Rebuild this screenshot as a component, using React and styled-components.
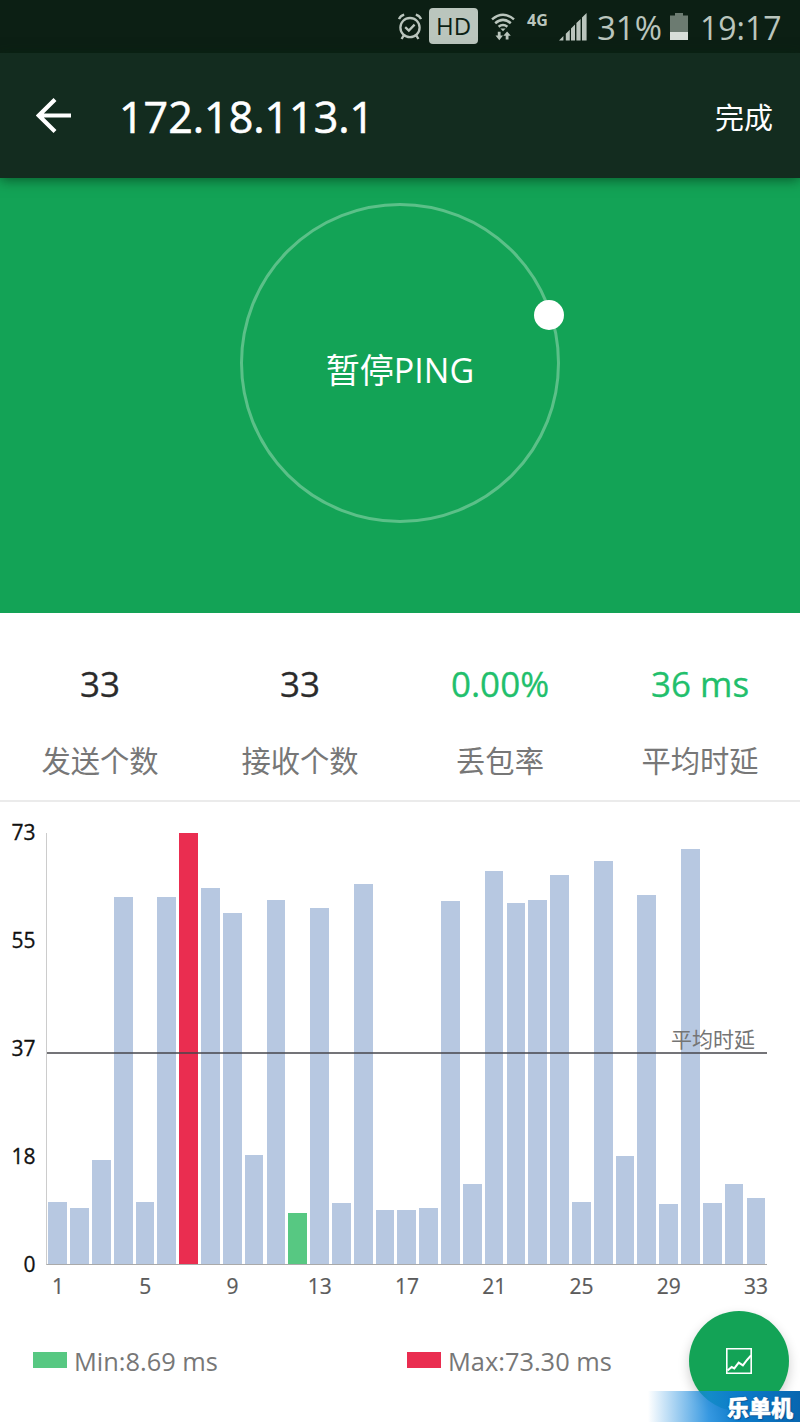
import React from "react";
import styled, { createGlobalStyle } from "styled-components";

const GlobalStyle = createGlobalStyle`
  * {
    box-sizing: border-box;
  }
  body {
    margin: 0;
    background: white;
    font-family: "Open Sans", "Noto Sans CJK SC", sans-serif;
  }
`;

const samples = [
  10.54, 9.52, 17.64, 62.36, 10.54, 62.36, 73.3, 64.0, 59.7, 18.6, 61.85, 8.69,
  60.63, 10.37, 64.68, 9.23, 9.13, 9.52, 61.7, 13.6, 66.92, 61.4, 61.9, 66.24,
  10.63, 68.54, 18.3, 62.75, 10.2, 70.58, 10.37, 13.65, 11.3,
];

const max = Math.max(...samples);
const min = Math.min(...samples);

const barColor = (value) => {
  if (value === max) return "#ea2d50";
  if (value === min) return "#57c882";
  return "#b7c8e1";
};

const stats = [
  { value: "33", label: "发送个数" },
  { value: "33", label: "接收个数" },
  { value: "0.00%", label: "丢包率", good: true },
  { value: "36 ms", label: "平均时延", good: true },
];

const AlarmIcon = () => (
  <svg width="24" height="28" viewBox="0 0 24 28" fill="none" stroke="#bac5bd" strokeWidth="2.3">
    <circle cx="12" cy="14.6" r="9.6" />
    <path d="M7.2 14.2l3.6 3.4 5.8-6" />
    <path d="M1 6.2Q2.4 2.6 6.2 1.6M23 6.2Q21.6 2.6 17.8 1.6" />
    <path d="M5.6 22.6L3.6 26M18.4 22.6l2 3.4" />
  </svg>
);

const WifiIcon = () => (
  <svg width="24" height="28" viewBox="0 0 24 28" fill="none" stroke="#bac5bd" strokeWidth="2.5">
    <path d="M1 6.4Q12-2.8 23 6.4" />
    <path d="M4.2 10.3q7.8-6.8 15.6 0" />
    <path d="M7.6 13.8q4.4-3.6 8.8 0" />
    <path d="M9.4 15.4h5.2L12 18.2z" fill="#bac5bd" stroke="none" />
    <path d="M6.8 18.8h2.8v3.8H12l-3.7 4.6-3.8-4.6h2.3zM14.7 26.6v-3.8h-2.4l3.8-4.4 3.7 4.4h-2.3v3.8z" fill="#bac5bd" stroke="none" />
  </svg>
);

const SignalIcon = () => (
  <svg width="28" height="28" viewBox="0 0 28 28" fill="#bac5bd">
    <path d="M0 27.5l4.4-4.4v4.4zM6.8 20.7l4-4v10.8h-4zM12 15.5l4-4v16h-4zM17.4 10.1l4.2-4.2v21.6h-4.2zM23 4.5L27.6 0v27.5H23z" />
  </svg>
);

const BatteryIcon = () => (
  <svg width="18" height="27" viewBox="0 0 18 27">
    <path d="M5 0h8v2.5h5V27H0V2.5h5z" fill="#6c7b71" />
    <path d="M0 19h18v8H0z" fill="#d8ded9" />
  </svg>
);

const BackIcon = () => (
  <svg width="36" height="36" viewBox="0 0 36 36" fill="none" stroke="white" strokeWidth="4.2">
    <path d="M35 17.5H3M19 1.6L2.8 17.5 19 33.4" />
  </svg>
);

const TrendIcon = () => (
  <svg width="26" height="26" viewBox="0 0 26 26" fill="none" stroke="white" strokeWidth="1.6">
    <path d="M.8.8h24.4v24.4H.8z" />
    <path d="M1.5 22.6l4.2-3.6 2.6 1.4 4.4-5.8 4.2 2.8L21 12l4-4.6" strokeWidth="2" />
  </svg>
);

const App = () => {
  return (
    <Screen>
      <GlobalStyle />
      <StatusBar>
        <AlarmIcon />
        <HdBadge>HD</HdBadge>
        <WifiIcon />
        <Network>4G</Network>
        <SignalIcon />
        <Percent>31%</Percent>
        <BatteryIcon />
        <Clock>19:17</Clock>
      </StatusBar>
      <Header>
        <BackIcon />
        <Title>172.18.113.1</Title>
        <Done>完成</Done>
      </Header>
      <Hero>
        <Ring>
          暂停PING
          <Knob />
        </Ring>
      </Hero>
      <Stats>
        {stats.map((stat) => (
          <Stat key={stat.label}>
            <Value $good={stat.good}>{stat.value}</Value>
            <Label>{stat.label}</Label>
          </Stat>
        ))}
      </Stats>
      <Chart>
        <YAxis>
          {[73, 55, 37, 18, 0].map((tick) => (
            <span key={tick}>{tick}</span>
          ))}
        </YAxis>
        <Plot>
          {samples.map((value, i) => (
            <Bar
              key={i}
              $color={barColor(value)}
              style={{ height: `${(value / max) * 100}%` }}
            />
          ))}
          <Average>
            <span>平均时延</span>
          </Average>
        </Plot>
        <XAxis>
          {samples.map((_, i) => (
            <Tick key={i}>{i % 4 === 0 ? i + 1 : ""}</Tick>
          ))}
        </XAxis>
      </Chart>
      <Legend>
        <LegendItem>
          <Swatch $color="#57c882" />
          Min:8.69 ms
        </LegendItem>
        <LegendItem>
          <Swatch $color="#ea2d50" />
          Max:73.30 ms
        </LegendItem>
      </Legend>
      <Fab>
        <TrendIcon />
      </Fab>
      <Brand>乐单机</Brand>
    </Screen>
  );
};

const Screen = styled.div`
  position: relative;
  display: flex;
  flex-direction: column;
  width: 800px;
  height: 1422px;
  overflow: hidden;
  background: white;
`;

const StatusBar = styled.div`
  display: flex;
  align-items: center;
  height: 53px;
  padding-left: 398px;
  background: #0c1f14;
  color: #bac5bd;
  white-space: nowrap;
  svg {
    flex: none;
  }
`;

const HdBadge = styled.div`
  display: flex;
  align-items: center;
  justify-content: center;
  width: 49px;
  height: 36px;
  margin: 0 13px 2px 7px;
  border-radius: 4px;
  background: #bac5bd;
  color: #0c1f14;
  font-size: 24px;
`;

const Network = styled.div`
  width: 23px;
  margin: 0 9px 13px 12px;
  font-size: 16px;
  font-weight: 700;
  line-height: 20px;
`;

const Percent = styled.div`
  width: 66px;
  margin: 2px 7px 0 10px;
  font-size: 33px;
`;

const Clock = styled.div`
  margin: 2px 0 0 12px;
  font-size: 32px;
`;

const Header = styled.div`
  position: relative;
  z-index: 1;
  display: flex;
  align-items: center;
  height: 125px;
  padding: 0 27px 0 36px;
  background: #132c1f;
  color: white;
  box-shadow: 0 2px 12px rgba(0, 40, 15, 0.6);
`;

const Title = styled.h1`
  flex: 1;
  margin: 3px 0 0 47px;
  font-size: 43px;
  font-weight: 400;
  line-height: 60px;
  -webkit-text-stroke: 0.6px white;
`;

const Done = styled.div`
  margin-top: 4px;
  font-size: 29px;
  line-height: 40px;
`;

const Hero = styled.div`
  display: flex;
  justify-content: center;
  height: 435px;
  padding-top: 25px;
  background: #13a356;
`;

const Ring = styled.div`
  position: relative;
  display: flex;
  align-items: center;
  justify-content: center;
  width: 320px;
  height: 320px;
  padding-top: 10px;
  border: 3px solid #5bc088;
  border-radius: 50%;
  color: white;
  font-size: 34px;
`;

const Knob = styled.div`
  position: absolute;
  top: 94px;
  right: -7px;
  width: 30px;
  height: 30px;
  border-radius: 50%;
  background: white;
`;

const Stats = styled.div`
  display: grid;
  grid-template-columns: repeat(4, 1fr);
  height: 189px;
  padding-top: 47px;
  border-bottom: 2px solid #ebebeb;
`;

const Stat = styled.div`
  display: flex;
  flex-direction: column;
  align-items: center;
`;

const Value = styled.div`
  color: ${(props) => (props.$good ? "#22bf6c" : "#2b2b2b")};
  font-size: 35px;
  line-height: 48px;
  -webkit-text-stroke: 0.3px currentColor;
`;

const Label = styled.div`
  margin-top: 33px;
  color: #777;
  font-size: 29.3px;
  line-height: 40px;
`;

const Chart = styled.div`
  display: grid;
  grid-template-columns: 46px 721px;
  grid-template-rows: 432px 42px;
  padding-top: 31px;
  font-size: 21px;
`;

const YAxis = styled.div`
  display: flex;
  flex-direction: column;
  justify-content: space-between;
  align-items: flex-end;
  margin: -15px 0 -13px;
  padding-right: 10.5px;
  color: #111;
  line-height: 28px;
  -webkit-text-stroke: 0.3px #111;
`;

const Plot = styled.div`
  position: relative;
  display: grid;
  grid-template-columns: repeat(33, 1fr);
  align-items: end;
  border-left: 1px solid #ccc;
  border-bottom: 1px solid #aaa;
`;

const Bar = styled.div`
  margin: 0 1.7px 0 1.4px;
  background: ${(props) => props.$color};
`;

const Average = styled.div`
  position: absolute;
  left: 0;
  right: 0;
  bottom: 210px;
  padding-right: 12px;
  border-bottom: 2px solid rgba(70, 70, 75, 0.75);
  color: #757575;
  text-align: right;
  line-height: 25px;
`;

const XAxis = styled.div`
  grid-column: 2;
  display: grid;
  grid-template-columns: repeat(33, 1fr);
  padding: 7px 0 0 1px;
`;

const Tick = styled.div`
  display: flex;
  justify-content: center;
  width: 100%;
  min-width: 0;
  color: #5b5b5b;
  line-height: 28px;
  -webkit-text-stroke: 0.2px #5b5b5b;
`;

const Legend = styled.div`
  display: grid;
  grid-template-columns: 374px 1fr;
  padding: 36px 0 0 33px;
`;

const LegendItem = styled.div`
  display: flex;
  align-items: center;
  gap: 7px;
  color: #777;
  font-size: 25.4px;
  line-height: 36px;
`;

const Swatch = styled.div`
  width: 34px;
  height: 16px;
  margin-bottom: 2px;
  background: ${(props) => props.$color};
`;

const Fab = styled.div`
  position: absolute;
  right: 11px;
  bottom: 11px;
  display: flex;
  align-items: center;
  justify-content: center;
  width: 100px;
  height: 100px;
  border-radius: 50%;
  background: #13a356;
  box-shadow: 0 5px 12px rgba(0, 0, 0, 0.2);
`;

const Brand = styled.div`
  position: absolute;
  right: 0;
  bottom: 0;
  width: 152px;
  height: 31px;
  padding-right: 7px;
  background: linear-gradient(
    90deg,
    rgba(20, 135, 220, 0),
    rgba(20, 135, 220, 0.85) 40%,
    #0c7bca 60%,
    #0866b0
  );
  color: white;
  font-family: "Noto Sans CJK SC", sans-serif;
  font-size: 22px;
  font-weight: 900;
  line-height: 30px;
  text-align: right;
  text-shadow: 0 0 2px #064a8c, 1px 1px 1px #064a8c;
  -webkit-text-stroke: 0.5px white;
`;

export default App;
